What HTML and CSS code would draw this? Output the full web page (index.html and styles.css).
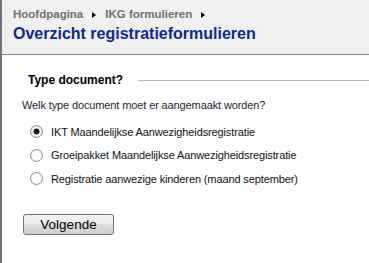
FILE: index.html
```html
<!DOCTYPE html>
<html lang="nl">
<head>
  <meta charset="UTF-8" />
  <title>Overzicht registratieformulieren</title>
  <link rel="stylesheet" href="styles.css">
</head>
<body>
  <div class="page">
    <div class="header">
      <div class="breadcrumb">
        <a href="#">Hoofdpagina</a><span class="arrow"></span>
        <a href="#">IKG formulieren</a><span class="arrow"></span>
      </div>
      <h1>Overzicht registratieformulieren</h1>
    </div>

    <form class="content">
      <div class="legend">Type document?</div>
      <p class="question">Welk type document moet er aangemaakt worden?</p>

      <div class="options">
        <label class="option"><input type="radio" name="doc" value="ikt" checked> IKT Maandelijkse Aanwezigheidsregistratie</label>
        <label class="option"><input type="radio" name="doc" value="groeipakket"> Groeipakket Maandelijkse Aanwezigheidsregistratie</label>
        <label class="option"><input type="radio" name="doc" value="september"> Registratie aanwezige kinderen (maand september)</label>
      </div>

      <button type="button" class="btn">Volgende</button>
    </form>
  </div>
</body>
</html>
```

FILE: styles.css
```css
body {
  margin: 0;
  font-family: "Liberation Sans", Arial, sans-serif;
  font-size: 11px;
  letter-spacing: -0.12px;
  color: #1e1e32;
  background: #fff;
}
.page {
  min-height: 100vh;
  border-left: 2px solid #6f7479;
}
.header {
  background: #f0f0f0;
  border-bottom: 1px solid #8a8a8a;
  padding: 8px 11px 11px;
}
.breadcrumb {
  display: flex;
  align-items: center;
  font-size: 11.5px;
  font-weight: bold;
  line-height: 13px;
  letter-spacing: 0;
}
.breadcrumb a {
  color: #707070;
  text-decoration: none;
}
.arrow {
  width: 0;
  height: 0;
  margin: 0 9px 0 9px;
  border-left: 4px solid #000;
  border-top: 3.5px solid transparent;
  border-bottom: 3.5px solid transparent;
}
h1 {
  margin: 3px 0 0;
  font-size: 16px;
  line-height: 19px;
  letter-spacing: 0;
  color: #0c2b8f;
}
.content {
  padding: 18px 0 0 20px;
}
.legend {
  display: flex;
  align-items: center;
  margin-left: 6px;
  font-size: 12px;
  font-weight: bold;
  line-height: 14px;
  letter-spacing: 0;
  color: #000;
}
.legend::after {
  content: "";
  flex: 1;
  height: 1px;
  margin-left: 15px;
  background: #b3bac9;
}
.question {
  margin: 12px 0 0;
  line-height: 13px;
}
.options {
  margin: 8px 0 0 8px;
}
.option {
  display: flex;
  align-items: center;
  height: 23.5px;
  color: #111;
}
.option input {
  appearance: none;
  width: 13px;
  height: 13px;
  margin: 0 8px 0 0;
  border: 1px solid #8c8c8c;
  border-radius: 50%;
  background: radial-gradient(circle, #fff 40%, #e6e6e6 100%);
}
.option input:checked {
  background: radial-gradient(circle, #1a1a1a 0, #1a1a1a 2.6px, #f4f4f4 3.4px, #e6e6e6 100%);
}
.btn {
  display: block;
  width: 91px;
  height: 21px;
  margin: 23px 0 0 1px;
  padding: 0;
  border: 1px solid #707070;
  border-radius: 3px;
  background: linear-gradient(#f2f2f2, #ebebeb 50%, #dddddd 50%, #cfcfcf);
  font-family: "Liberation Sans", Arial, sans-serif;
  font-size: 13.5px;
  letter-spacing: 0;
  color: #000;
}
```
